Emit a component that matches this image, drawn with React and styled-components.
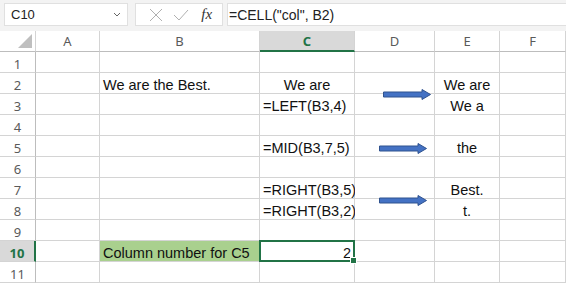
import React from 'react'
import styled, { createGlobalStyle, css } from 'styled-components'

const GlobalStyle = createGlobalStyle`
  body {
    margin: 0;
    font-family: 'Liberation Sans', Arial, sans-serif;
    background: #ffffff;
  }
`

const Window = styled.div`
  width: 566px;
  height: 285px;
  overflow: hidden;
  background: #fff;
`

const TopBar = styled.div`
  background: #f3f3f3;
  padding: 3px 0 5px 4px;
`

const FormulaBar = styled.div`
  display: flex;
  align-items: stretch;
  height: 23px;
`

const NameBox = styled.div`
  width: 124px;
  box-sizing: border-box;
  display: flex;
  align-items: center;
  justify-content: space-between;
  padding: 0 6px 0 6px;
  background: #fff;
  border: 1px solid #e0e0e0;
  font-size: 13px;
  color: #222;
`

const EditBox = styled.div`
  margin-left: 7px;
  width: 88px;
  box-sizing: border-box;
  display: flex;
  align-items: center;
  justify-content: space-around;
  padding: 0 6px 0 8px;
  background: #fff;
  border: 1px solid #e0e0e0;
`

const Fx = styled.span`
  font-family: 'Liberation Serif', 'Times New Roman', serif;
  font-style: italic;
  font-size: 15px;
  color: #333;
  margin-left: 4px;
`

const FormulaInput = styled.div`
  flex: 1;
  margin-left: 4px;
  display: flex;
  align-items: center;
  padding-left: 1px;
  background: #fff;
  border: 1px solid #e0e0e0;
  border-right: none;
  font-size: 14px;
  color: #222;
`

const Sheet = styled.div`
  position: relative;
  display: grid;
  grid-template-columns: 36px 64px 160px 95px 80px 65px 1fr;
  grid-auto-rows: 21px;
  background: #fff;
`

const Corner = styled.div`
  position: relative;
  background: #fff;
  border-right: 1px solid #d4d4d4;
  border-bottom: 1px solid #bdbdbd;
  box-sizing: border-box;

  &::after {
    content: '';
    position: absolute;
    right: 3px;
    bottom: 3px;
    width: 0;
    height: 0;
    border-left: 14px solid transparent;
    border-bottom: 14px solid #bfbfbf;
  }
`

const ColHead = styled.div`
  box-sizing: border-box;
  display: flex;
  align-items: center;
  justify-content: center;
  font-family: 'Noto Sans', 'Liberation Sans', sans-serif;
  font-size: 13px;
  color: #5a5a5a;
  background: #fff;
  border-right: 1px solid #d4d4d4;
  border-bottom: 1px solid #bdbdbd;

  ${p => p.$active && css`
    background: #d9d9d9;
    color: #217346;
    font-weight: bold;
    border-bottom: 2px solid #217346;
  `}
`

const RowHead = styled.div`
  box-sizing: border-box;
  display: flex;
  align-items: center;
  justify-content: center;
  padding-top: 3px;
  font-family: 'Noto Sans', 'Liberation Sans', sans-serif;
  font-size: 13px;
  color: #5a5a5a;
  background: #fff;
  border-right: 1px solid #bdbdbd;
  border-bottom: 1px solid #d4d4d4;

  ${p => p.$active && css`
    background: #d9d9d9;
    color: #217346;
    font-weight: bold;
    border-right: 2px solid #217346;
  `}
`

const Cell = styled.div`
  position: relative;
  box-sizing: border-box;
  display: flex;
  align-items: flex-end;
  padding: 0 3px 1px 3px;
  font-size: 14.5px;
  line-height: 14px;
  color: #111;
  white-space: nowrap;
  border-right: 1px solid #d4d4d4;
  border-bottom: 1px solid #d4d4d4;
  background: ${p => p.$fill || '#fff'};
  justify-content: ${p =>
    p.$align === 'center' ? 'center' : p.$align === 'right' ? 'flex-end' : 'flex-start'};

  ${p => p.$selected && css`
    &::after {
      content: '';
      position: absolute;
      left: -1px;
      top: -1px;
      right: -1px;
      bottom: -1px;
      border: 2px solid #217346;
    }
    &::before {
      content: '';
      position: absolute;
      right: -3px;
      bottom: -3px;
      width: 5px;
      height: 5px;
      background: #217346;
      border: 1px solid #fff;
      z-index: 2;
    }
  `}
`

const Arrow = styled.svg`
  position: absolute;
  width: 48px;
  height: 11px;
`

const columns = ['A', 'B', 'C', 'D', 'E', 'F']

// contents per row: { col: [text, align] }
const data = {
  2: { B: ['We are the Best.', 'left'], C: ['We are', 'center'], E: ['We are', 'center'] },
  3: { C: ['=LEFT(B3,4)', 'left'], E: ['We a', 'center'] },
  5: { C: ['=MID(B3,7,5)', 'left'], E: ['the', 'center'] },
  7: { C: ['=RIGHT(B3,5)', 'left'], E: ['Best.', 'center'] },
  8: { C: ['=RIGHT(B3,2)', 'left'], E: ['t.', 'center'] },
  10: { B: ['Column number for C5', 'left'], C: ['2', 'right'] },
}

// offsets inside the sheet (header row starts at 0)
const arrows = [
  { left: 383, top: 58 },
  { left: 379, top: 112 },
  { left: 379, top: 164 },
]

const BlueArrow = ({ left, top }) => (
  <Arrow viewBox="0 0 48 11" style={{ left, top }}>
    <path
      d="M0.5 3 H39 V0.5 L47.5 5.5 L39 10.5 V8 H0.5 Z"
      fill="#4472c4"
      stroke="#2f528f"
      strokeWidth="1"
    />
  </Arrow>
)

const App = () => {
  const rows = []
  for (let r = 1; r <= 11; r++) {
    rows.push(
      <RowHead key={`h${r}`} $active={r === 10}>{r}</RowHead>
    )
    columns.forEach(col => {
      const content = data[r] && data[r][col]
      rows.push(
        <Cell
          key={`${col}${r}`}
          $align={content ? content[1] : 'left'}
          $fill={r === 10 && col === 'B' ? '#a9d08e' : null}
          $selected={r === 10 && col === 'C'}
        >
          {content ? content[0] : ''}
        </Cell>
      )
    })
  }

  return (
    <Window>
      <GlobalStyle />
      <TopBar>
        <FormulaBar>
          <NameBox>
            <span>C10</span>
            <svg width="8" height="5" viewBox="0 0 8 5">
              <path d="M1 1 L4 4 L7 1" fill="none" stroke="#666" strokeWidth="1" />
            </svg>
          </NameBox>
          <EditBox>
            <svg width="16" height="16" viewBox="0 0 16 16">
              <path d="M2 2 L14 14 M14 2 L2 14" stroke="#b0b0b0" strokeWidth="1" />
            </svg>
            <svg width="18" height="16" viewBox="0 0 18 16">
              <path d="M2 8 L7 13 L16 3" fill="none" stroke="#b0b0b0" strokeWidth="1" />
            </svg>
            <Fx>fx</Fx>
          </EditBox>
          <FormulaInput>=CELL("col", B2)</FormulaInput>
        </FormulaBar>
      </TopBar>
      <Sheet>
        <Corner />
        {columns.map(c => (
          <ColHead key={c} $active={c === 'C'}>{c}</ColHead>
        ))}
        {rows}
        {arrows.map((a, i) => (
          <BlueArrow key={i} {...a} />
        ))}
      </Sheet>
    </Window>
  )
}

export default App
